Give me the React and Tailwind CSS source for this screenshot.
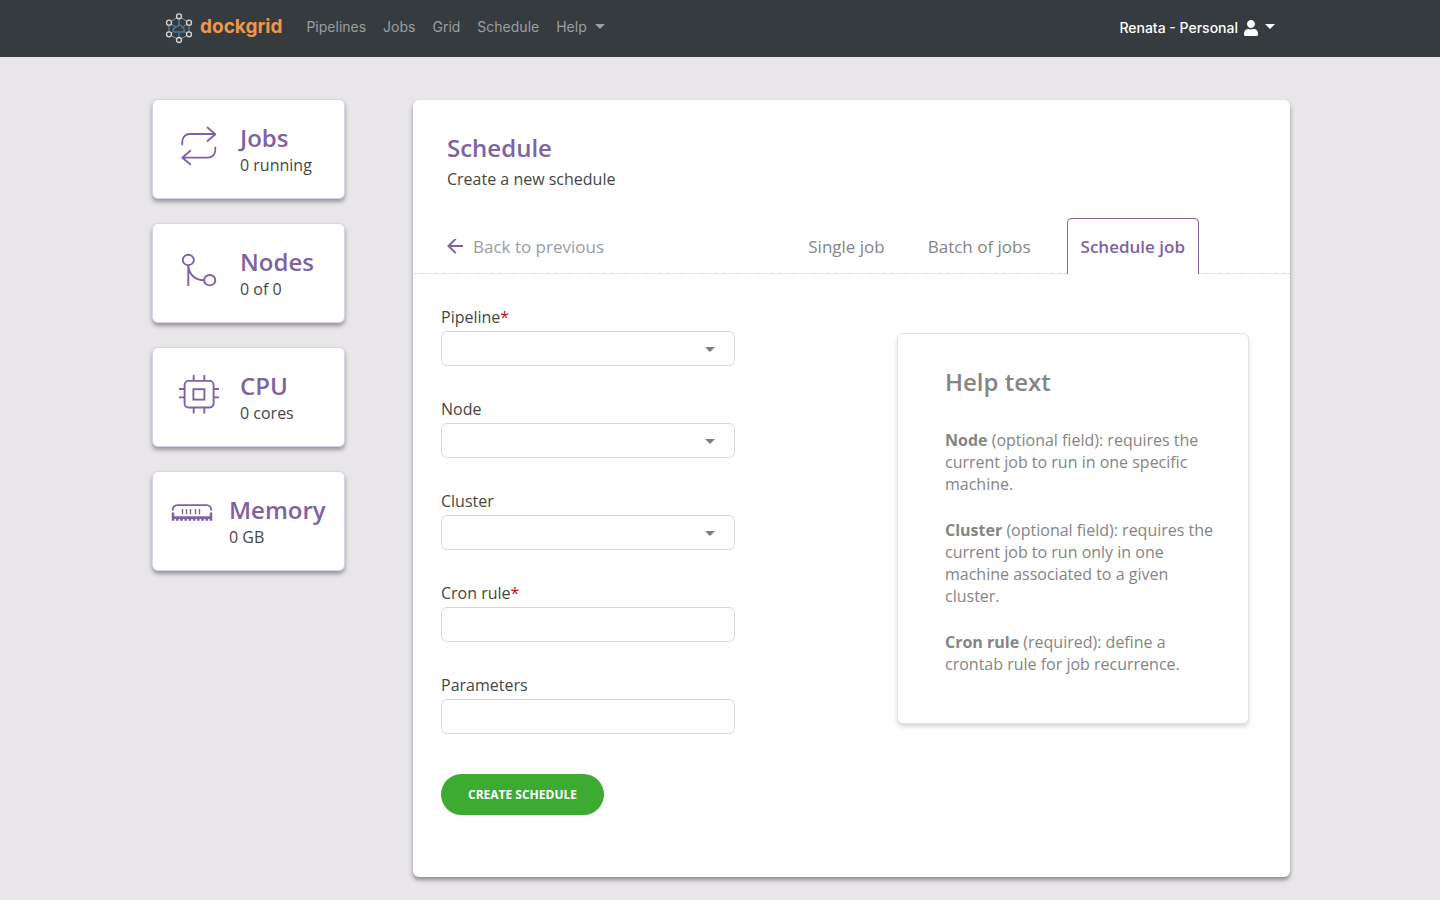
import { FaUser } from 'react-icons/fa';

function Caret({ className }) {
  return (
    <svg viewBox="0 0 10 5" className={className} fill="currentColor" aria-hidden="true">
      <path d="M0 0h10L5 5z" />
    </svg>
  );
}

function Logo() {
  return (
    <svg viewBox="45 35 84 96" className="h-8 w-7" fill="none" aria-hidden="true">
      <g stroke="#8b8f93" strokeWidth="3">
        <path d="M87 48L57 67V102L87 119L117 102V67Z" />
        <path d="M87 48V74M57 67L74 78M117 67L100 78M57 102L72 93M117 102L102 93M87 119V97" />
      </g>
      <path
        d="M76 95a6 6 0 0 1-1-12c1-5 5-6 8-4c2-7 13-6 13 2c5 0 7 4 6 7c2 4 0 7-3 7z"
        fill="#363b3f"
        stroke="#3f7fb8"
        strokeWidth="4"
      />
      <g fill="#363b3f" stroke="#d3d5d6" strokeWidth="4">
        <circle cx="87" cy="48" r="7.5" />
        <circle cx="57" cy="67" r="7.5" />
        <circle cx="117" cy="67" r="7.5" />
        <circle cx="57" cy="102" r="7.5" />
        <circle cx="117" cy="102" r="7.5" />
        <circle cx="87" cy="119" r="7.5" />
      </g>
    </svg>
  );
}

function JobsIcon() {
  return (
    <svg viewBox="0 0 40 40" className="size-10" fill="none" stroke="currentColor" strokeWidth="1.8" strokeLinecap="round" strokeLinejoin="round" aria-hidden="true">
      <path d="M3.3 18.5V15.5a7.5 7.5 0 0 1 7.5-7.5H36.3M28.5 1.5L36.3 8.2L28.5 15" />
      <path d="M36.3 21.5V24.2a7.5 7.5 0 0 1-7.5 7.5H3.3M11.3 24.8L3.3 31.7L11.3 38.3" />
    </svg>
  );
}

function NodesIcon() {
  return (
    <svg viewBox="0 0 40 40" className="size-10" fill="none" stroke="currentColor" strokeWidth="1.9" aria-hidden="true">
      <ellipse cx="9.3" cy="10" rx="5.6" ry="5.2" />
      <ellipse cx="30.7" cy="30.2" rx="5.6" ry="5.2" />
      <path d="M9.3 15.2V36M9.3 15.2C9.8 24 15.5 30.2 25.1 30.2" />
    </svg>
  );
}

function CpuIcon() {
  return (
    <svg viewBox="0 0 40 40" className="size-10" fill="none" stroke="currentColor" strokeWidth="1.9" aria-hidden="true">
      <rect x="5.6" y="6.9" width="29" height="26.6" rx="4" />
      <rect x="14.4" y="15.2" width="11" height="10.4" />
      <path d="M14.7 1V6.9M25.3 1V6.9M14.7 33.5V39.4M25.3 33.5V39.4M0 15H5.6M0 23.4H5.6M34.6 15H40M34.6 23.4H40" />
    </svg>
  );
}

function MemoryIcon() {
  return (
    <svg viewBox="0 6 42 34" className="h-[34px] w-[42px]" fill="none" stroke="currentColor" strokeWidth="1.8" aria-hidden="true">
      <path d="M1.8 18.6V17.6a4.4 4.4 0 0 1 4.4-4.4H35.8a4.4 4.4 0 0 1 4.4 4.4V18.6" />
      <path d="M2 20.6V26M40 20.6V26" strokeWidth="2.4" />
      <path d="M.8 25.6H41.2" strokeWidth="2.6" />
      <path d="M.8 27.8H41.2" strokeWidth="2" strokeDasharray="2.6 1.6" />
      <path d="M11.5 17V22.3M15.5 17V22.3M19.5 17V22.3M24.5 17V22.3M28.5 17V22.3" strokeWidth="1.4" />
    </svg>
  );
}

const stats = [
  { title: 'Jobs', detail: '0 running', Icon: JobsIcon, spacing: 'pl-[26px] gap-[21px]' },
  { title: 'Nodes', detail: '0 of 0', Icon: NodesIcon, spacing: 'pl-[26px] gap-[21px]' },
  { title: 'CPU', detail: '0 cores', Icon: CpuIcon, spacing: 'pl-[26px] gap-[21px]' },
  { title: 'Memory', detail: '0 GB', Icon: MemoryIcon, spacing: 'pl-[18px] gap-4' },
];

function StatCard({ title, detail, Icon, spacing }) {
  return (
    <section
      className={`flex items-start rounded-md border border-[#d9d3e6] bg-white pt-[23px] pb-[21px] text-[#7f62a4] shadow-[0_3px_4px_rgba(0,0,0,0.35)] ${spacing}`}
    >
      <div className="flex-none pt-[3px]">
        <Icon />
      </div>
      <div>
        <h2 className="text-2xl leading-[30px] font-semibold">{title}</h2>
        <p className="text-base leading-6 text-[#464646]">{detail}</p>
      </div>
    </section>
  );
}

const controlClass = 'block h-[35px] w-full appearance-none rounded-md border border-[#d8d8d8] bg-white px-3 text-base text-[#464646]';

function Field({ id, label, required, select }) {
  return (
    <div>
      <label htmlFor={id} className="mb-0.5 block text-base leading-6 text-[#464646]">
        {label}
        {required && <span className="text-[#c00d0d]">*</span>}
      </label>
      {select ? (
        <div className="relative">
          <select id={id} required={required} className={controlClass}>
            <option value=""></option>
          </select>
          <Caret className="pointer-events-none absolute top-4 right-5 h-[5px] w-2.5 text-[#7d7d7d]" />
        </div>
      ) : (
        <input id={id} type="text" required={required} className={controlClass} />
      )}
    </div>
  );
}

function Navbar() {
  return (
    <header className="bg-[#363b3f] font-[Inter,sans-serif]">
      <div className="mx-auto flex h-[57px] max-w-[1110px] items-center pb-0.5">
        <a href="#home" className="flex items-center gap-[7px] text-[19px] font-bold text-[#f0964b]">
          <Logo />
          <span>dockgrid</span>
        </a>
        <nav className="ml-6 flex gap-[17px] pb-0.5 text-sm leading-6 text-[#9b9ea0]">
          <a href="#pipelines">Pipelines</a>
          <a href="#jobs">Jobs</a>
          <a href="#grid">Grid</a>
          <a href="#schedule">Schedule</a>
          <button type="button" className="flex items-center gap-2">
            Help
            <Caret className="h-[5px] w-2.5" />
          </button>
        </nav>
        <button type="button" className="ml-auto flex items-center text-sm leading-6 font-medium text-white">
          Renata - Personal
          <FaUser className="ml-1.5 h-4 w-3.5" aria-hidden="true" />
          <Caret className="mb-0.5 ml-[7px] h-[5px] w-2.5" />
        </button>
      </div>
    </header>
  );
}

export default function App() {
  return (
    <div className="min-h-screen bg-[#e8e6e9] font-['Open_Sans',sans-serif]">
      <Navbar />
      <div className="mx-auto flex max-w-[1140px] items-start gap-[68px] pt-[42px] pb-[23px] pl-0.5">
        <aside className="flex w-[193px] flex-none flex-col gap-6">
          {stats.map((stat) => (
            <StatCard key={stat.title} {...stat} />
          ))}
        </aside>

        <main className="mt-px min-w-0 flex-1 rounded-md bg-white shadow-[0_3px_4px_rgba(0,0,0,0.4)]">
          <div className="px-[34px] pt-8 pb-[27px]">
            <h1 className="text-2xl leading-8 font-semibold text-[#7f62a4]">Schedule</h1>
            <p className="mt-[3px] text-base leading-6 text-[#464646]">Create a new schedule</p>
          </div>

          <div className="flex h-14 items-stretch justify-between bg-[repeating-linear-gradient(90deg,#dcdcdc_0_5px,transparent_5px_7px)] bg-[length:100%_1px] bg-bottom bg-no-repeat pr-[91px] pl-[34px] text-[17px]">
            <a href="#previous" className="flex items-center gap-2.5 pt-0.5 text-[#9a9d9f]">
              <svg viewBox="0 1 16 16" className="size-4 text-[#7f62a4]" fill="none" stroke="currentColor" strokeWidth="2" aria-hidden="true">
                <path d="M16 8H1.5M8.8 .9L1.5 8L8.8 15.1" />
              </svg>
              Back to previous
            </a>
            <nav className="flex gap-[17px] text-[#858585]">
              <a href="#single" className="flex items-center px-[13px] pt-0.5">Single job</a>
              <a href="#batch" className="flex items-center px-[13px] pt-0.5">Batch of jobs</a>
              <a
                href="#schedule-job"
                aria-current="page"
                className="ml-1.5 flex items-center rounded-t-[5px] border border-b-0 border-[#7f62a4] bg-white px-[13px] font-semibold text-[#7f62a4]"
              >
                Schedule job
              </a>
            </nav>
          </div>

          <div className="flex items-start justify-between pt-[31px] pr-[41px] pb-[62px] pl-7">
            <form className="w-[294px]" onSubmit={(event) => event.preventDefault()}>
              <div className="flex flex-col gap-[31px]">
                <Field id="pipeline" label="Pipeline" required select />
                <Field id="node" label="Node" select />
                <Field id="cluster" label="Cluster" select />
                <Field id="cron" label="Cron rule" required />
                <Field id="parameters" label="Parameters" />
              </div>
              <button type="submit" className="mt-10 h-[41px] rounded-full bg-[#3daa32] px-[27px] text-xs font-bold text-white">
                CREATE SCHEDULE
              </button>
            </form>

            <section className="mt-7 w-[352px] rounded-md border border-[#e2e2e2] bg-white pt-8 pr-7 pb-12 pl-[47px] text-base leading-[22px] text-[#858585] shadow-[0_3px_4px_rgba(0,0,0,0.15)]">
              <h2 className="mb-[31px] text-2xl leading-8 font-semibold">Help text</h2>
              <div className="flex flex-col gap-6">
                <p>
                  <b>Node</b> (optional field): requires the current job to run in one specific machine.
                </p>
                <p>
                  <b>Cluster</b> (optional field): requires the current job to run only in one machine associated to a given cluster.
                </p>
                <p>
                  <b>Cron rule</b> (required): define a crontab rule for job recurrence.
                </p>
              </div>
            </section>
          </div>
        </main>
      </div>
    </div>
  );
}
